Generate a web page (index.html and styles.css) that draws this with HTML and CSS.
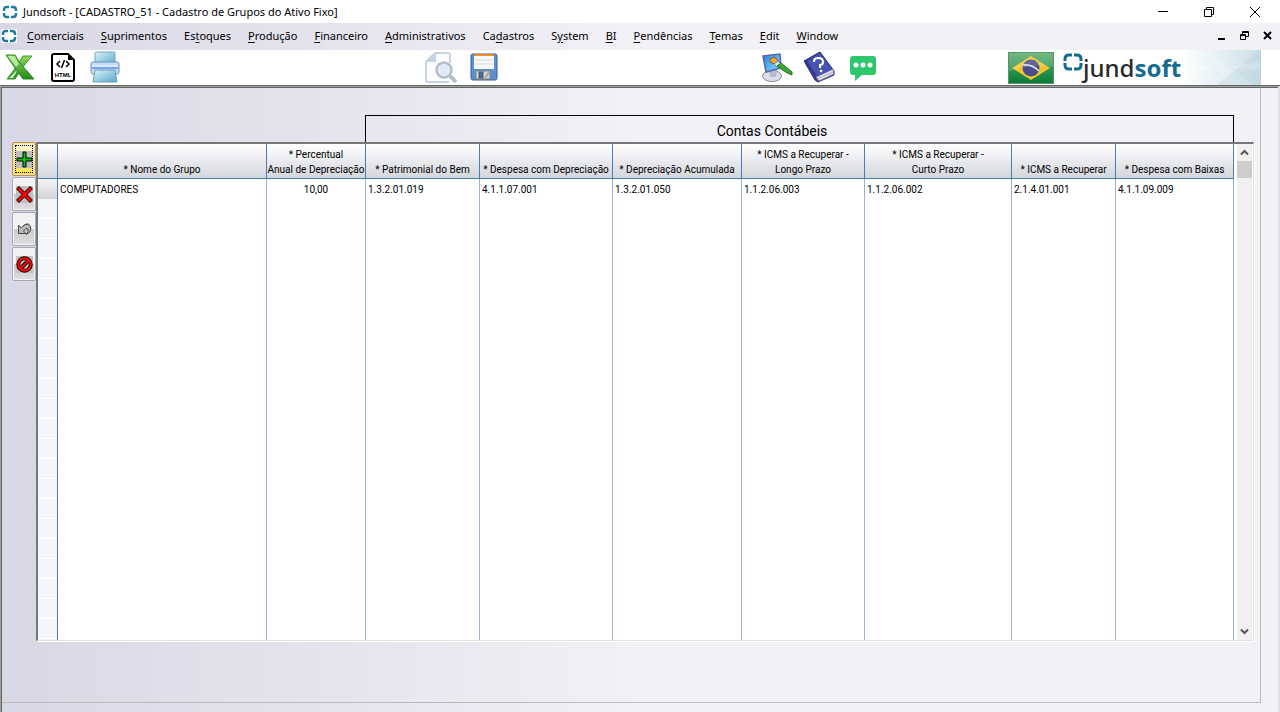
FILE: index.html
```html
<!DOCTYPE html>
<html lang="pt-BR">
<head>
<meta charset="utf-8">
<title>Jundsoft - [CADASTRO_51 - Cadastro de Grupos do Ativo Fixo]</title>
<link rel="stylesheet" href="styles.css">
</head>
<body>
<svg class="defs" aria-hidden="true">
  <symbol id="ring" viewBox="0 0 16 14">
    <path d="M7 2H5Q2 2 2 5V6M9 2H11Q14 2 14 5V6M7 12H5Q2 12 2 9V8M9 12H11Q14 12 14 9V8" fill="none" stroke="#1b7c9e" stroke-width="2.400"/>
  </symbol>
</svg>

<header class="titlebar">
  <svg class="app-icon"><use href="#ring"/></svg>
  <h1 class="title">Jundsoft - [CADASTRO_51 - Cadastro de Grupos do Ativo Fixo]</h1>
  <div class="window-controls">
    <button aria-label="Minimizar"><svg viewBox="0 0 12 12"><path d="M1 5.500H11"/></svg></button>
    <button aria-label="Restaurar"><svg viewBox="0 0 12 12"><path d="M1.500 3.500H8.500V10.500H1.500ZM3.500 3.500V1.500H10.500V8.500H8.500"/></svg></button>
    <button aria-label="Fechar"><svg viewBox="0 0 12 12"><path d="M1 1L11 11M11 1L1 11"/></svg></button>
  </div>
</header>

<nav class="menubar">
  <svg class="app-icon boxed"><use href="#ring"/></svg>
  <div class="menus">
    <button><u>C</u>omerciais</button>
    <button><u>S</u>uprimentos</button>
    <button>Es<u>t</u>oques</button>
    <button><u>P</u>rodução</button>
    <button><u>F</u>inanceiro</button>
    <button><u>A</u>dministrativos</button>
    <button>Ca<u>d</u>astros</button>
    <button>S<u>y</u>stem</button>
    <button><u>B</u>I</button>
    <button><u>P</u>endências</button>
    <button><u>T</u>emas</button>
    <button><u>E</u>dit</button>
    <button><u>W</u>indow</button>
  </div>
  <div class="child-controls">
    <button aria-label="Minimizar janela"><svg viewBox="0 0 9 9"><path class="thick" d="M1 8H8"/></svg></button>
    <button aria-label="Restaurar janela"><svg viewBox="0 0 9 9"><path d="M0 4.500H6M.500 3.500H5.500V8.500H.500ZM2.500 3V.500H8.500V5.500H6M2.500 1.500H8.500"/></svg></button>
    <button aria-label="Fechar janela"><svg viewBox="0 0 9 9"><path class="thick" d="M1 1L8 8M8 1L1 8"/></svg></button>
  </div>
</nav>

<div class="toolbar">
  <div class="tools tools-export">
    <button aria-label="Exportar Excel"><svg viewBox="0 0 32 32">
      <defs><linearGradient id="xg" x2="0" y2="1"><stop offset="0" stop-color="#8fdc5c"/><stop offset="1" stop-color="#24861b"/></linearGradient></defs>
      <path d="M20 5H29L23 12L20 16L12 28H4L14 15Z" fill="url(#xg)" stroke="#3e9a30"/>
      <path d="M3 4H12L17 12L31 28H20L14 20Z" fill="url(#xg)" stroke="#2c8422"/>
      <path d="M5 5H11L16 13L13 16Z" fill="#d5f5bd" opacity=".7"/><path d="M6 27L14 19L13 22L10 27Z" fill="#efffe3" opacity=".8"/>
    </svg></button>
    <button aria-label="Exportar HTML"><svg viewBox="0 0 32 32">
      <path d="M8 3H22L28 9V28Q28 30 26 30H8Q6 30 6 28V5Q6 3 8 3Z" fill="#fff" stroke="#000" stroke-width="2"/>
      <path d="M22 3L28 9H22Z"/>
      <path d="M14 10L11 13L14 16M20 10L23 13L20 16M18.500 9L15.500 17" fill="none" stroke="#000" stroke-width="1.500"/>
      <text x="17" y="26" text-anchor="middle" class="html-mark">HTML</text>
    </svg></button>
    <button aria-label="Imprimir"><svg viewBox="0 0 32 32">
      <defs><linearGradient id="pg" x2="1" y2="1"><stop offset="0" stop-color="#d9f4fa"/><stop offset="1" stop-color="#58a8cd"/></linearGradient></defs>
      <rect x="6" y="1" width="20" height="14" rx="1" fill="url(#pg)" stroke="#72a9bd"/>
      <rect x="2" y="11" width="28" height="12" rx="2" fill="#c5dcfb" stroke="#6f95bb"/>
      <path d="M2 17H30" stroke="#78a6ef" stroke-width="2"/><path d="M3 15H29" stroke="#eef6ff"/>
      <path d="M6 19H26L28 31H4Z" fill="url(#pg)" stroke="#6b9fb8"/>
    </svg></button>
  </div>
  <div class="tools tools-record">
    <button aria-label="Pesquisar" disabled><svg viewBox="0 0 32 32">
      <path d="M10 2H23Q25 2 25 4V12M10 2L1 11V29Q1 31 3 31H24" fill="#fbfcfe" stroke="#c5d3e5" stroke-width="2"/>
      <path d="M11 1V11H1Z" fill="#c5d3e5"/>
      <circle cx="19" cy="19" r="7.500" fill="#e1e9f5" stroke="#b6bfc7" stroke-width="2.500"/>
      <path d="M24 24L31 31" stroke="#b6bfc7" stroke-width="4"/>
    </svg></button>
    <button aria-label="Salvar"><svg viewBox="0 0 32 32">
      <rect x="3" y="3" width="26" height="26" rx="2" fill="#5b91cf" stroke="#345f98"/>
      <rect x="6" y="3" width="20" height="15" fill="#f7f8f9"/><rect x="6" y="3" width="20" height="2" fill="#ef8a27"/>
      <path d="M6 9H26M6 13H26" stroke="#d4d9df"/>
      <rect x="8" y="20" width="14" height="8" fill="#d9dad6" stroke="#7d8388"/><rect x="11" y="21" width="4" height="6" fill="#3d70af" stroke="#555"/>
      <path d="M17 27L21 21" stroke="#a3a6a5" stroke-width="2"/>
    </svg></button>
  </div>
  <div class="tools tools-help">
    <button aria-label="Temas"><svg viewBox="0 0 32 32">
      <defs><linearGradient id="sg" x2="1" y2="1"><stop offset="0" stop-color="#247fe0"/><stop offset="1" stop-color="#8fe0ff"/></linearGradient></defs>
      <ellipse cx="11" cy="25" rx="9.500" ry="5.500" fill="#dedeea" stroke="#8b8b9e"/><path d="M8 19H16L15 26H9Z" fill="#b7b9cf"/>
      <path d="M2 5L19 3L20 17L5 21Z" fill="url(#sg)" stroke="#5268a8" stroke-width="1.500"/>
      <path d="M9 8L14 6L17 10L14 13L9 11Z" fill="#e9a83e" stroke="#8b5b22"/><path d="M13 13L17 10L20 13L16 16Z" fill="#dfe6ec" stroke="#718294"/>
      <path d="M16 15L20 12L31 21V24Q25 22 16 15Z" fill="#39a82f" stroke="#216c21"/>
    </svg></button>
    <button aria-label="Ajuda"><svg viewBox="0 0 32 32">
      <path d="M0 10L16 1L30 20V24L14 31L11 29Z" fill="#313b91" stroke="#242b70"/>
      <path d="M12 26L29 18L30 23L15 30Z" fill="#e3e4ee" stroke="#70739a"/><path d="M13 28L29 21" stroke="#a9aabf"/>
      <path d="M3 10L16 2L28 18L13 25Z" fill="#4954b0"/>
      <path d="M10 11Q10 7 14 7Q19 7 19 11Q19 14 16 14V17" fill="none" stroke="#fff" stroke-width="2"/><circle cx="17" cy="20" r="1.300" fill="#fff"/>
    </svg></button>
    <button aria-label="Conversa"><svg viewBox="0 0 32 32">
      <path d="M6 5H26Q29 5 29 8V21Q29 24 26 24H15L8 30V24H6Q3 24 3 21V8Q3 5 6 5Z" fill="#2fc76c"/>
      <g fill="#fff"><circle cx="9" cy="14" r="2.500"/><circle cx="16" cy="14" r="2.500"/><circle cx="23" cy="14" r="2.500"/></g>
    </svg></button>
  </div>
  <div class="brand">
    <svg class="flag" viewBox="0 0 46 32" role="img" aria-label="Brasil">
      <defs><linearGradient id="fg" x2="0" y2="1"><stop offset="0" stop-color="#5cae6c"/><stop offset="1" stop-color="#087a36"/></linearGradient></defs>
      <rect width="46" height="32" fill="url(#fg)"/><path d="M4 16L23 4L42 16L23 28Z" fill="#efc62f"/>
      <circle cx="23" cy="16" r="8.500" fill="#4a4c8c"/><path d="M15 13Q24 12 31 19" fill="none" stroke="#dde2ee" stroke-width="1.500"/>
      <path d="M1 1H45V15Q22 11 1 20Z" fill="#fff" opacity=".15"/><rect x=".500" y=".500" width="45" height="31" fill="none" stroke="#5b9068"/>
    </svg>
    <div class="logo">
      <svg class="logo-ring" viewBox="0 0 20 18"><path d="M9 2H6Q2 2 2 6V8M11 2H14Q18 2 18 6V8M9 16H6Q2 16 2 12V10M11 16H14Q18 16 18 12V10" fill="none" stroke="#146b91" stroke-width="3"/></svg>
      <span class="wordmark">jund<b>soft</b></span>
      <svg class="facets" viewBox="0 0 66 34" preserveAspectRatio="none"><path d="M0 22L66 12V20L18 14Z" fill="#fff" opacity=".25"/><path d="M20 0L60 34H40Z" fill="#fff" opacity=".2"/><path d="M66 0L30 34H66Z" fill="#8fb8ca" opacity=".15"/></svg>
    </div>
  </div>
</div>

<main class="frame">
  <section class="panel">
    <div class="group-title">Contas Contábeis</div>
    <div class="workspace">
      <div class="row-actions">
        <button class="focused" aria-label="Incluir"><svg viewBox="0 0 17 17"><rect width="17" height="17" fill="#bebebe"/><path d="M7 1H10V7H16V10H10V16H7V10H1V7H7Z" fill="#0bbd15" stroke="#000"/></svg></button>
        <button aria-label="Excluir"><svg viewBox="0 0 17 17"><rect width="17" height="17" fill="#bebebe"/><path d="M1.500 1.500L15.500 15.500M15.500 1.500L1.500 15.500" stroke="#000" stroke-width="4"/><path d="M2 2L15 15M15 2L2 15" stroke="#f00" stroke-width="2.600"/></svg></button>
        <button aria-label="Desfazer"><svg viewBox="0 0 17 17"><path d="M2.500 4V12.500H10L7.500 10Q10 6 12 8Q13 10 10.500 13.500Q15.500 11 14.500 6Q13 1 8.500 4L5 7ZM7 5Q10 2 12.500 4" fill="#b9b9b9" stroke="#484848"/></svg></button>
        <button aria-label="Cancelar"><svg viewBox="0 0 17 17"><rect width="17" height="17" fill="#c5c5c5"/><g fill="none"><circle cx="8.500" cy="8.500" r="6.200" stroke="#000" stroke-width="4"/><path d="M4 13L13 4" stroke="#000" stroke-width="4"/><circle cx="8.500" cy="8.500" r="6.200" stroke="#f00" stroke-width="2.200"/><path d="M4 13L13 4" stroke="#f00" stroke-width="2.200"/></g></svg></button>
      </div>
      <div class="grid">
        <table>
          <colgroup><col class="w-selector"><col><col class="w-percent"><col class="w-asset"><col class="w-expense"><col class="w-accum"><col class="w-long"><col class="w-short"><col class="w-icms"><col class="w-write-off"></colgroup>
          <thead><tr>
            <th></th><th>* Nome do Grupo</th><th>* Percentual<br>Anual de Depreciação</th><th>* Patrimonial do Bem</th><th>* Despesa com Depreciação</th><th>* Depreciação Acumulada</th><th>* ICMS a Recuperar -<br>Longo Prazo</th><th>* ICMS a Recuperar -<br>Curto Prazo</th><th>* ICMS a Recuperar</th><th>* Despesa com Baixas</th>
          </tr></thead>
          <tbody>
            <tr class="record"><td></td><td>COMPUTADORES</td><td class="number">10,00</td><td>1.3.2.01.019</td><td>4.1.1.07.001</td><td>1.3.2.01.050</td><td>1.1.2.06.003</td><td>1.1.2.06.002</td><td>2.1.4.01.001</td><td>4.1.1.09.009</td></tr>
            <tr class="empty"><td></td><td></td><td></td><td></td><td></td><td></td><td></td><td></td><td></td><td></td></tr>
          </tbody>
        </table>
        <div class="scrollbar">
          <button aria-label="Rolar para cima"><svg viewBox="0 0 9 7"><path d="M1 5.500L4.500 2L8 5.500"/></svg></button>
          <div class="thumb"></div>
          <button class="down" aria-label="Rolar para baixo"><svg viewBox="0 0 9 7"><path d="M1 1.500L4.500 5L8 1.500"/></svg></button>
        </div>
      </div>
    </div>
  </section>
</main>
</body>
</html>
```
FILE: styles.css
```css
* { box-sizing: border-box; }
body {
  margin: 0;
  min-height: 100vh;
  display: flex;
  flex-direction: column;
  background: #fff;
  color: #000;
  font: 11px/16px "Noto Sans", "Open Sans", sans-serif;
}
button {
  margin: 0;
  padding: 0;
  border: 0;
  background: none;
  color: inherit;
  font: inherit;
}
svg { display: block; }
.defs { display: none; }

.titlebar { display: flex; align-items: center; height: 23px; padding-left: 2px; }
.app-icon { width: 16px; height: 14px; flex: none; }
.boxed { background: #fff; }
.title { margin: 0 0 0 5px; font-size: 11px; font-weight: 400; }
.window-controls { display: flex; margin-left: auto; padding-right: 2px; }
.window-controls button { width: 46px; height: 20px; display: grid; place-items: center; }
.window-controls svg { width: 12px; height: 12px; }
.window-controls path, .child-controls path { fill: none; stroke: #000; }

.menubar {
  display: flex;
  align-items: center;
  height: 27px;
  padding: 0 1px 2px;
  background: linear-gradient(90deg, #d8d7e5, #f2f1f6 50%);
}
.menus { display: flex; gap: 17px; margin-left: 10px; }
.menus u { text-underline-offset: 2px; }
.child-controls { display: flex; margin-left: auto; }
.child-controls button { width: 23px; height: 24px; display: grid; place-items: center; }
.child-controls svg { width: 9px; height: 9px; }
.child-controls .thick { stroke-width: 2; }

.toolbar {
  display: flex;
  height: 36px;
  padding-right: 19px;
  border-bottom: 1px solid #646864;
}
.tools { display: flex; align-items: flex-start; padding-top: 1px; }
.tools svg { width: 32px; height: 32px; }
.tools-export { gap: 11px; margin-left: 3px; }
.tools-record { gap: 11px; margin-left: 304px; }
.tools-help { gap: 11px; margin-left: 261px; }
.html-mark { font: bold 6px "Liberation Sans", sans-serif; }
.brand { display: flex; align-items: center; margin-left: auto; }
.flag { width: 46px; height: 32px; }
.logo {
  display: flex;
  width: 207px;
  height: 35px;
  padding-left: 9px;
  border-right: 1px solid #c4ccd2;
  background: linear-gradient(90deg, #fff 62%, #cbe0e8);
}
.logo-ring { flex: none; width: 20px; height: 18px; margin-top: 3px; }
.wordmark { color: #2a2a2c; font: 500 24px/36px "Noto Sans", sans-serif; }
.wordmark b { color: #176b91; font-weight: 700; }
.facets { flex: 1; height: 35px; min-width: 0; }

.frame {
  flex: 1;
  display: flex;
  padding: 1px 17px 9px 1px;
  border-style: solid;
  border-width: 1px 2px 0 1px;
  border-color: #9b9e9b #e3e3e3 #9b9e9b #9b9e9b;
  box-shadow: inset 1px 1px #646864;
  background: linear-gradient(90deg, #d8d7e5, #f2f1f6 50%);
}
.panel {
  flex: 1;
  display: flex;
  flex-direction: column;
  min-width: 0;
  padding: 27px 6px 61px 10px;
  border: 1px solid #bbb;
  border-width: 0 1px 1px 0;
}
.group-title {
  align-self: flex-end;
  width: 869px;
  height: 27px;
  margin-right: 20px;
  border: 1px solid #000;
  border-bottom: 0;
  text-align: center;
  font: 14px/30px Roboto, "Liberation Sans", sans-serif;
  padding-right: 55px;
}
.workspace { flex: 1; display: flex; }
.row-actions { display: flex; flex-direction: column; gap: 1px; }
.row-actions button {
  display: grid;
  place-items: center;
  width: 24px;
  height: 34px;
  border: 1px solid #a9a9ad;
  border-radius: 2px;
  box-shadow: inset 0 0 0 1px #f5f5f5;
  background: linear-gradient(#f2f2f2 50%, #cacaca 50%, #dedede);
}
.row-actions .focused {
  border-color: #b99749;
  outline: 1px dotted #000;
  outline-offset: -4px;
  box-shadow: inset 0 0 0 1px #f8de9c;
  background: linear-gradient(#fdf6dd, #ffed9a 50%, #fce04e);
}
.row-actions svg { width: 17px; height: 17px; }

.grid {
  flex: 1;
  display: flex;
  min-width: 0;
  border: 2px solid #777;
  border-right: 1px solid #e3e3e3;
  border-bottom: 1px solid #e3e3e3;
  box-shadow: 1px 1px #fff;
  background: #fff;
}
table {
  flex: 1;
  table-layout: fixed;
  width: 100%;
  min-width: 0;
  border-collapse: separate;
  border-spacing: 0;
  font: 10px/15px Roboto, "Liberation Sans", sans-serif;
}
.w-selector { width: 20px; }
.w-percent { width: 99px; }
.w-asset { width: 114px; }
.w-expense { width: 133px; }
.w-accum { width: 129px; }
.w-long { width: 123px; }
.w-short { width: 147px; }
.w-icms { width: 104px; }
.w-write-off { width: 118px; }
th {
  height: 35px;
  padding: 0 0 1px;
  border-right: 1px solid #4a7ebb;
  border-bottom: 1px solid #4a7ebb;
  background: linear-gradient(#fff, #d3d6db);
  font-weight: 400;
  vertical-align: bottom;
  white-space: nowrap;
}
td {
  padding: 0 2px;
  border-right: 1px solid #9ab3d5;
}
td:first-child { border-right-color: #4a7ebb; }
.record td { height: 20px; }
.record td:first-child { background: linear-gradient(#f3f4f5, #d0d3d7); }
.record .number { text-align: center; }
.empty td { height: auto; }
.empty td:first-child { background: repeating-linear-gradient(#f3f7fc 0 19px, #fff 19px 20px); }

.scrollbar {
  display: flex;
  flex-direction: column;
  flex: none;
  width: 15px;
  margin: 0 1px 0 3px;
  background: #f0f0f0;
}
.scrollbar button { display: grid; place-items: center; height: 17px; }
.scrollbar svg { width: 9px; height: 7px; }
.scrollbar path { fill: none; stroke: #555; stroke-width: 2; }
.scrollbar .thumb { height: 17px; background: #cdcdcd; }
.scrollbar .down { margin-top: auto; }
```
